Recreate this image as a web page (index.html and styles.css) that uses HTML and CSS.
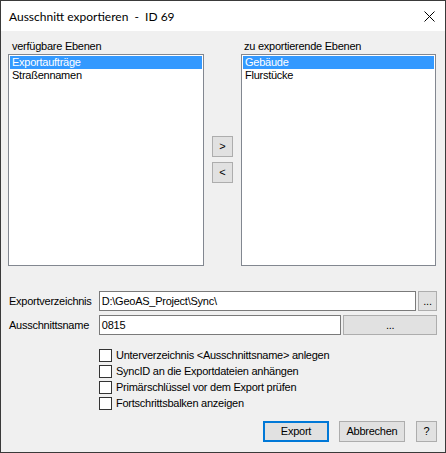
FILE: index.html
```html
<!DOCTYPE html>
<html>
<head>
<meta charset="utf-8">
<link rel="stylesheet" href="styles.css">
</head>
<body>
<div class="window">
  <div class="titlebar">
    <span class="title">Ausschnitt exportieren&nbsp; -&nbsp; ID 69</span>
    <svg class="close" width="11" height="11" viewBox="0 0 11 11"><path d="M0.5 0.5 L10.5 10.5 M10.5 0.5 L0.5 10.5" stroke="#000" stroke-width="1" fill="none"/></svg>
  </div>
  <div class="content">
    <div class="lists">
      <div class="col">
        <div class="label">verfügbare Ebenen</div>
        <div class="listbox">
          <div class="item sel">Exportaufträge</div>
          <div class="item">Straßennamen</div>
        </div>
      </div>
      <div class="mid">
        <button class="btn small">&gt;</button>
        <button class="btn small">&lt;</button>
      </div>
      <div class="col right">
        <div class="label">zu exportierende Ebenen</div>
        <div class="listbox">
          <div class="item sel">Gebäude</div>
          <div class="item">Flurstücke</div>
        </div>
      </div>
    </div>
    <div class="fields">
      <div class="row">
        <span class="flabel">Exportverzeichnis</span>
        <div class="input wide">D:\GeoAS_Project\Sync\</div>
        <button class="btn dots">...</button>
      </div>
      <div class="row">
        <span class="flabel">Ausschnittsname</span>
        <div class="input narrow">0815</div>
        <button class="btn dots2">...</button>
      </div>
    </div>
    <div class="checks">
      <label class="check"><span class="box"></span>Unterverzeichnis &lt;Ausschnittsname&gt; anlegen</label>
      <label class="check"><span class="box"></span>SyncID an die Exportdateien anhängen</label>
      <label class="check"><span class="box"></span>Primärschlüssel vor dem Export prüfen</label>
      <label class="check"><span class="box"></span>Fortschrittsbalken anzeigen</label>
    </div>
    <div class="actions">
      <button class="btn act default">Export</button>
      <button class="btn act">Abbrechen</button>
      <button class="btn help">?</button>
    </div>
  </div>
</div>
</body>
</html>
```
FILE: styles.css
```css
* { box-sizing: border-box; }
html, body { margin: 0; padding: 0; }
body {
  width: 446px;
  height: 453px;
  font-family: "Liberation Sans", Arial, sans-serif;
  font-size: 11px;
  letter-spacing: -0.25px;
  color: #000;
  background: #f0f0f0;
}
.window {
  width: 446px;
  height: 453px;
  border: 1px solid #3a3a3a;
  background: #f0f0f0;
  display: flex;
  flex-direction: column;
}
.titlebar {
  height: 30px;
  background: #fff;
  display: flex;
  align-items: center;
  justify-content: space-between;
  padding: 0 10px 0 8px;
  flex: none;
}
.title {
  font-family: "Lato", "Liberation Sans", sans-serif;
  font-size: 12px;
  letter-spacing: 0;
  color: #000;
  padding-top: 1px;
}
.close { display: block; margin-top: 1px; }
.content {
  padding: 9px 8px 0 7px;
  display: flex;
  flex-direction: column;
}
.lists {
  display: flex;
  height: 226px;
}
.col {
  width: 196px;
  display: flex;
  flex-direction: column;
}
.col.right { width: 195px; }
.col.right .label { padding-left: 3px; }
.label {
  height: 13px;
  line-height: 13px;
  padding-left: 4px;
  margin-bottom: 1px;
}
.listbox {
  flex: 1;
  background: #fff;
  border: 1px solid #828790;
  padding: 1px;
}
.item {
  height: 13px;
  line-height: 13px;
  padding-left: 2px;
}
.item.sel {
  background: #3399ff;
  color: #fff;
}
.mid {
  width: 37px;
  display: flex;
  flex-direction: column;
  align-items: center;
  padding-top: 96px;
  gap: 5px;
}
.btn {
  font-family: "Liberation Sans", Arial, sans-serif;
  font-size: 11px;
  letter-spacing: -0.25px;
  color: #000;
  background: #e1e1e1;
  border: 1px solid #adadad;
  padding: 0;
  margin: 0;
  line-height: 1;
}
.btn.small { width: 21px; height: 21px; letter-spacing: 0; }
.fields {
  margin-top: 25px;
  display: flex;
  flex-direction: column;
  gap: 4px;
}
.row {
  display: flex;
  align-items: center;
  height: 20px;
}
.flabel {
  width: 91px;
  padding-left: 1px;
}
.input {
  height: 20px;
  background: #fff;
  border: 1px solid #7a7a7a;
  line-height: 18px;
  padding-left: 2px;
}
.input.wide { width: 318px; }
.input.narrow { width: 243px; }
.btn.dots { width: 19px; height: 20px; margin-left: 2px; }
.btn.dots2 { width: 94px; height: 20px; margin-left: 2px; }
.checks {
  margin-top: 14px;
  padding-left: 91px;
  display: flex;
  flex-direction: column;
  gap: 3px;
}
.check {
  display: flex;
  align-items: center;
  height: 13px;
  line-height: 13px;
}
.box {
  width: 13px;
  height: 13px;
  border: 1px solid #333;
  background: #fff;
  margin-right: 4px;
  flex: none;
}
.actions {
  margin-top: 11px;
  display: flex;
  justify-content: flex-end;
  height: 21px;
}
.btn.act { width: 66px; height: 21px; margin-right: 10px; }
.btn.act + .btn.act { margin-right: 11px; }
.btn.default { border: 2px solid #0078d7; }
.btn.help { width: 21px; height: 21px; }
```
